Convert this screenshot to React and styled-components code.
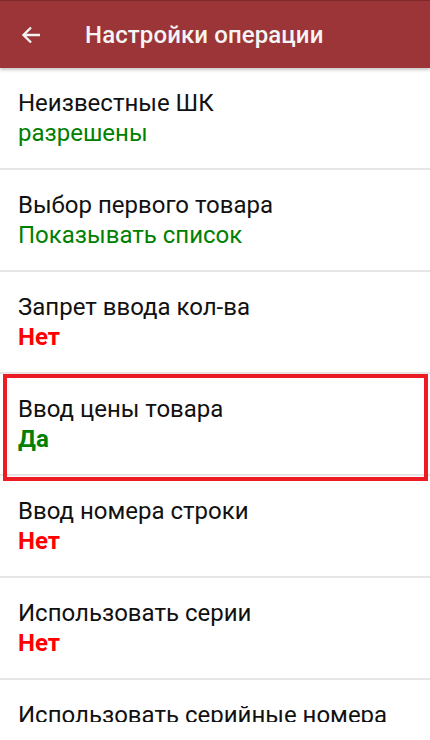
import React from 'react';
import styled, { createGlobalStyle } from 'styled-components';

const GlobalStyle = createGlobalStyle`
  html, body {
    margin: 0;
    padding: 0;
    background: #ffffff;
    font-family: Roboto, "Noto Sans", sans-serif;
  }
`;

const Screen = styled.div`
  width: 430px;
  height: 722px;
  display: flex;
  flex-direction: column;
  overflow: hidden;
  background: #ffffff;
`;

const Toolbar = styled.header`
  position: relative;
  z-index: 2;
  flex: none;
  height: 68px;
  display: flex;
  align-items: center;
  background: #9b3537;
  border-top: 1px solid #7e2a2c;
  box-sizing: border-box;
  box-shadow: 0 2px 3px rgba(0, 0, 0, 0.22);
`;

const BackButton = styled.button`
  width: 64px;
  height: 100%;
  display: flex;
  align-items: center;
  padding: 0 0 0 21px;
  border: 0;
  background: transparent;
  color: #f2f2f2;
`;

const Title = styled.h1`
  margin: 0 0 0 21px;
  font-size: 24px;
  font-weight: 500;
  color: #f4f4f4;
  letter-spacing: 0.1px;
`;

const List = styled.ul`
  flex: 1;
  overflow: hidden;
  list-style: none;
  margin: 0;
  padding: 0;
`;

const Row = styled.li`
  position: relative;
  padding: 20px 18px 20px;
  border-bottom: 2px solid #e6e6e6;
`;

const Label = styled.div`
  font-size: 24px;
  line-height: 30px;
  color: #111111;
  white-space: nowrap;
`;

const Value = styled.div`
  font-size: 24px;
  line-height: 30px;
  color: ${(p) => (p.$tone === 'red' ? '#ff0000' : '#008000')};
  font-weight: ${(p) => (p.$bold ? 700 : 400)};
`;

const Highlight = styled.div`
  position: absolute;
  top: 0;
  left: 3px;
  right: 2px;
  bottom: -7px;
  border: 4px solid #ed1c24;
  pointer-events: none;
`;

const settings = [
  { label: 'Неизвестные ШК', value: 'разрешены', tone: 'green' },
  { label: 'Выбор первого товара', value: 'Показывать список', tone: 'green' },
  { label: 'Запрет ввода кол-ва', value: 'Нет', tone: 'red', bold: true },
  { label: 'Ввод цены товара', value: 'Да', tone: 'green', bold: true, marked: true },
  { label: 'Ввод номера строки', value: 'Нет', tone: 'red', bold: true },
  { label: 'Использовать серии', value: 'Нет', tone: 'red', bold: true },
  { label: 'Использовать серийные номера', value: 'Нет', tone: 'red', bold: true },
];

const ArrowBack = () => (
  <svg width="20" height="20" viewBox="0 0 20 20" fill="none">
    <path d="M19 10H2.5M10 2.5L2.5 10L10 17.5" stroke="currentColor" strokeWidth="2.4" />
  </svg>
);

const App = () => {
  return (
    <Screen>
      <GlobalStyle />
      <Toolbar>
        <BackButton aria-label="Назад">
          <ArrowBack />
        </BackButton>
        <Title>Настройки операции</Title>
      </Toolbar>
      <List>
        {settings.map((s) => (
          <Row key={s.label}>
            <Label>{s.label}</Label>
            <Value $tone={s.tone} $bold={s.bold}>{s.value}</Value>
            {s.marked && <Highlight />}
          </Row>
        ))}
      </List>
    </Screen>
  );
};

export default App;
